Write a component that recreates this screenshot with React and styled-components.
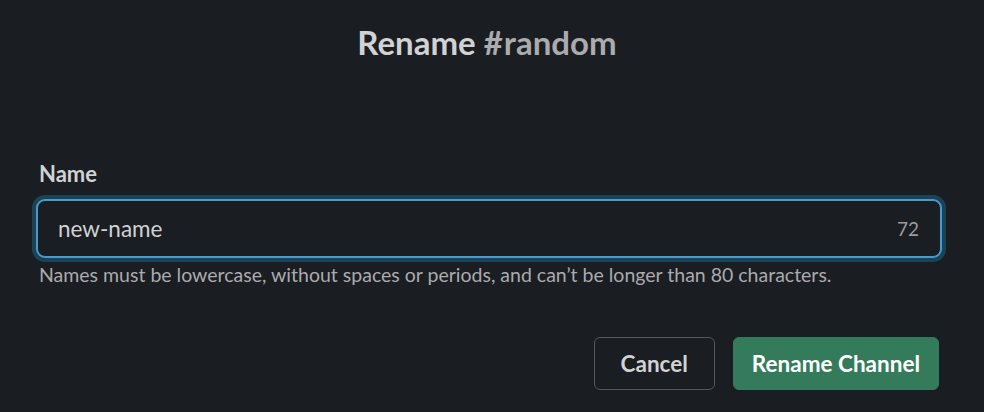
import React, { useState } from "react";
import styled, { createGlobalStyle } from "styled-components";

const GlobalStyle = createGlobalStyle`
  html, body {
    margin: 0;
    padding: 0;
    background: #1a1d21;
  }
  body {
    font-family: Lato, "Noto Sans", "Liberation Sans", sans-serif;
    -webkit-font-smoothing: antialiased;
  }
`;

export default function App() {
  const [name, setName] = useState("new-name");

  return (
    <Modal>
      <GlobalStyle />
      <Header>
        <Title>
          Rename <Channel><Hash>#</Hash>random</Channel>
        </Title>
      </Header>
      <Body>
        <Label htmlFor="channel-name">Name</Label>
        <InputWrap>
          <InputBox
            id="channel-name"
            value={name}
            onChange={ev => setName(ev.target.value)}
          />
          <Counter>{80 - name.length}</Counter>
        </InputWrap>
        <Hint>
          Names must be lowercase, without spaces or periods, and can’t be longer than 80 characters.
        </Hint>
      </Body>
      <Footer>
        <Button>Cancel</Button>
        <Button primary>Rename Channel</Button>
      </Footer>
    </Modal>
  );
}

const Modal = styled.div`
  display: flex;
  flex-direction: column;
  width: 984px;
  height: 412px;
  box-sizing: border-box;
  padding: 0 43px 0 37px;
  background: #1a1d21;
  color: #d1d2d3;
`;

const Header = styled.div`
  display: flex;
  justify-content: center;
  padding: 20px 0 0 0;
  margin-right: -33px;
  margin-left: -37px;
  height: 160px;
  box-sizing: border-box;
`;

const Title = styled.h1`
  margin: 0;
  font-size: 33px;
  line-height: 44px;
  font-weight: 700;
  color: #d1d2d3;
`;

const Channel = styled.span`
  color: #ababad;
`;

const Hash = styled.span`
  margin-right: 1px;
`;

const Body = styled.div`
  display: flex;
  flex-direction: column;
`;

const Label = styled.label`
  margin-left: 2px;
  font-size: 22px;
  line-height: 28px;
  font-weight: 700;
  color: #d1d2d3;
  margin-bottom: 12px;
`;

const InputWrap = styled.div`
  position: relative;
  display: flex;
  align-items: center;
`;

const InputBox = styled.input`
  width: 100%;
  height: 57px;
  box-sizing: border-box;
  padding: 0 70px 0 20px;
  background: #1a1d21;
  color: #d1d2d3;
  font-family: inherit;
  font-size: 22.5px;
  border: 1px solid #4a9bcc;
  border-radius: 8px;
  box-shadow: 0 0 0 1px #4a9bcc, 0 0 0 5px rgba(29, 155, 209, 0.3);
  outline: none;
`;

const Counter = styled.span`
  position: absolute;
  right: 22px;
  font-size: 19px;
  color: #9a9b9d;
`;

const Hint = styled.div`
  margin: 5px 0 0 2px;
  font-size: 19.5px;
  line-height: 26px;
  color: #ababad;
`;

const Footer = styled.div`
  display: flex;
  justify-content: flex-end;
  gap: 18px;
  margin-top: 49px;
  margin-right: 2px;
`;

const Button = styled.button`
  height: 53px;
  box-sizing: border-box;
  padding: 0 ${p => (p.primary ? "18px" : "26px")};
  min-width: 120px;
  font-family: inherit;
  font-size: 22.5px;
  font-weight: 700;
  border-radius: 6px;
  cursor: pointer;
  border: 1px solid ${p => (p.primary ? "#347b5b" : "#545659")};
  background: ${p => (p.primary ? "#347b5b" : "transparent")};
  color: ${p => (p.primary ? "#ffffff" : "#d1d2d3")};
`;
